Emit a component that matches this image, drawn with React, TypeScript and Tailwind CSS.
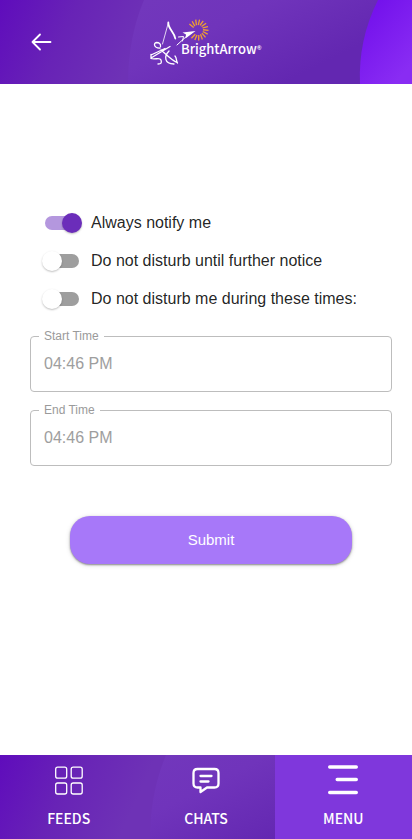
import { useState } from 'react';

const rays = Array.from({ length: 14 }, (_, i) => -150 + i * 21);

function Backdrop({ id, header }: { id: string; header?: boolean }) {
  return (
    <svg
      aria-hidden="true"
      className="absolute inset-0 h-full w-full"
      viewBox="0 0 412 84"
      preserveAspectRatio="none"
    >
      <defs>
        <linearGradient id={id + 'base'} gradientUnits="userSpaceOnUse" x1="0" y1="0" x2="130" y2="60">
          <stop offset="0" stopColor="#5f0cbc" />
          <stop offset="0.5" stopColor="#6823b6" />
          <stop offset="1" stopColor="#6e32b6" />
        </linearGradient>
        <linearGradient id={id + 'sheet'} gradientUnits="userSpaceOnUse" x1="190" y1="-20" x2="250" y2="100">
          <stop offset="0" stopColor="#7237bc" />
          <stop offset="0.400" stopColor="#7034bb" />
          <stop offset="1" stopColor="#6327b1" />
        </linearGradient>
        <linearGradient id={id + 'disc'} gradientUnits="userSpaceOnUse" x1="362" y1="20" x2="412" y2="64">
          <stop offset="0" stopColor="#7412ec" />
          <stop offset="1" stopColor="#892cf3" />
        </linearGradient>
      </defs>
      <rect width="412" height="84" fill={'url(#' + id + 'base)'} />
      <path
        d={header ? 'M144 0Q128 38 128 84H412V0Z' : 'M166 0Q150 38 150 84H412V0Z'}
        fill={'url(#' + id + 'sheet)'}
      />
      {header && <path d="M378 0Q358 40 360 84H412V0Z" fill={'url(#' + id + 'disc)'} />}
    </svg>
  );
}

function Logo() {
  return (
    <svg role="img" aria-label="BrightArrow" width="120" height="52" viewBox="146 16 120 52">
      <g stroke="#f0a030" strokeWidth="1.300">
        {rays.map((a) => (
          <line key={a} x1="203" y1="30" x2="208.500" y2="31" transform={'rotate(' + a + ' 198 30)'} />
        ))}
      </g>
      <g fill="none" stroke="#fff" strokeLinecap="round" strokeLinejoin="round">
        <path d="M168.300 23L162.500 44" strokeWidth="0.800" />
        <path d="M168.300 22.500C168 29 174.500 32 175.300 38.500" strokeWidth="1.800" />
        <path d="M177 45L188 35M178.500 37L183.500 36.500L182.500 41" strokeWidth="1" />
        <path d="M160 48C154 48.500 153 43 156.500 42.500C159 42.500 161 44 160.500 46.500M151 58L170 46.500M151 55L165 48.500M151 54.500V58.500C155 60 160 57 161 60C162 63 161 64 158 64M161 50C165 53 170 59 177 62.500M169 51C164 56 164 64 174 64M175 56C177 58 176 61 177.500 63" strokeWidth="1.300" />
      </g>
      <path d="M195.500 31L182.500 32.500L186 34.500L185.500 38.500Z" fill="#fff" />
      <text x="181" y="54" fill="#fff" fontSize="13" fontWeight="500" fontFamily="'Noto Sans CJK SC', sans-serif">
        BrightArrow
      </text>
      <text x="257" y="50" fill="#fff" fontSize="6" fontWeight="700" fontFamily="'Liberation Sans', sans-serif">
        ®
      </text>
    </svg>
  );
}

function Option({ label, checked, onSelect }: { label: string; checked: boolean; onSelect: () => void }) {
  return (
    <label className="flex h-[38px] cursor-pointer items-center gap-3 pl-[15px] text-base text-black/87">
      <input
        type="checkbox"
        role="switch"
        checked={checked}
        onChange={onSelect}
        className="relative h-[14px] w-[34px] shrink-0 cursor-pointer appearance-none rounded-full bg-[#9e9e9e] before:absolute before:-top-[3px] before:-left-[3px] before:size-5 before:rounded-full before:bg-white before:shadow-[0_1px_2px_rgba(0,0,0,0.25)] checked:bg-[#b497de] checked:before:left-[17px] checked:before:bg-[#6b2dba]"
      />
      {label}
    </label>
  );
}

function TimeField({ id, label }: { id: string; label: string }) {
  return (
    <fieldset className="min-w-0 rounded border border-[#bdbdbd] px-2">
      <legend className="h-3 px-[5px] text-xs leading-3 text-[#9a9a9a]">
        <label htmlFor={id}>{label}</label>
      </legend>
      <input
        id={id}
        type="text"
        disabled
        defaultValue="04:46 PM"
        className="block h-[49px] w-full bg-transparent px-[5px] pb-[5px] text-base text-[#9e9e9e]"
      />
    </fieldset>
  );
}

const tab = 'flex flex-1 flex-col items-center justify-between pt-2 pb-[9px]';

export default function App() {
  const [mode, setMode] = useState(0);
  const options = ['Always notify me', 'Do not disturb until further notice', 'Do not disturb me during these times:'];

  return (
    <div className="flex min-h-screen flex-col bg-white font-['Liberation_Sans',Arial,sans-serif]">
      <header className="relative grid h-21 grid-cols-[1fr_auto_1fr] items-center overflow-hidden">
        <Backdrop id="top" header />
        <button type="button" aria-label="Back" className="relative ml-[30px] w-6 cursor-pointer">
          <svg width="24" height="24" viewBox="0 0 24 24" fill="none" stroke="#fff" strokeWidth="1.800" strokeLinecap="round" strokeLinejoin="round">
            <path d="M20.500 12H2.500M10 4.500L2.500 12L10 19.500" />
          </svg>
        </button>
        <div className="relative">
          <Logo />
        </div>
      </header>

      <main className="flex-1 pt-30 pr-5 pb-10 pl-[30px]">
        <form onSubmit={(e) => e.preventDefault()}>
          {options.map((label, i) => (
            <Option key={label} label={label} checked={mode === i} onSelect={() => setMode(i)} />
          ))}
          <div className="mt-3 flex flex-col gap-3">
            <TimeField id="start-time" label="Start Time" />
            <TimeField id="end-time" label="End Time" />
          </div>
          <div className="mt-[50px] px-10">
            <button
              type="submit"
              className="h-12 w-full cursor-pointer rounded-[20px] bg-[#a778f9] text-[15px] text-white shadow-[0_1px_2px_rgba(0,0,0,0.4),0_1px_5px_rgba(0,0,0,0.15)]"
            >
              Submit
            </button>
          </div>
        </form>
      </main>

      <footer className="relative overflow-hidden">
        <Backdrop id="nav" />
        <nav className="relative flex h-21 font-['Noto_Sans_CJK_SC',sans-serif] text-sm leading-6 font-medium text-white">
          <a href="#feeds" className={tab}>
            <svg width="30" height="32" viewBox="0 0 30 32" fill="none" stroke="#fff" strokeWidth="1.300">
              <rect x="1.700" y="4.200" width="11" height="11" rx="2" />
              <rect x="17.200" y="4.200" width="11" height="11" rx="2" />
              <rect x="1.700" y="20" width="11" height="11" rx="2" />
              <rect x="17.200" y="20" width="11" height="11" rx="2" />
            </svg>
            FEEDS
          </a>
          <a href="#chats" className={tab}>
            <svg width="30" height="32" viewBox="0 0 30 32" fill="none" stroke="#fff" strokeWidth="2.300" strokeLinecap="round" strokeLinejoin="round">
              <path d="M6.500 6H23.500Q27.500 6 27.500 10V20.500Q27.500 24.500 23.500 24.500H16L9.500 29V24.500H6.500Q2.500 24.500 2.500 20.500V10Q2.500 6 6.500 6Z" />
              <path d="M9.500 13H20.500M9.500 18.500H17.500" />
            </svg>
            CHATS
          </a>
          <a href="#menu" aria-current="page" className={tab + ' bg-[#7f37dc]'}>
            <svg width="30" height="32" viewBox="0 0 30 32" fill="none" stroke="#fff" strokeWidth="3.400" strokeLinecap="round">
              <path d="M1.700 4H28.300M9.200 16.500H28.300M1.700 29.500H28.300" />
            </svg>
            MENU
          </a>
        </nav>
      </footer>
    </div>
  );
}
